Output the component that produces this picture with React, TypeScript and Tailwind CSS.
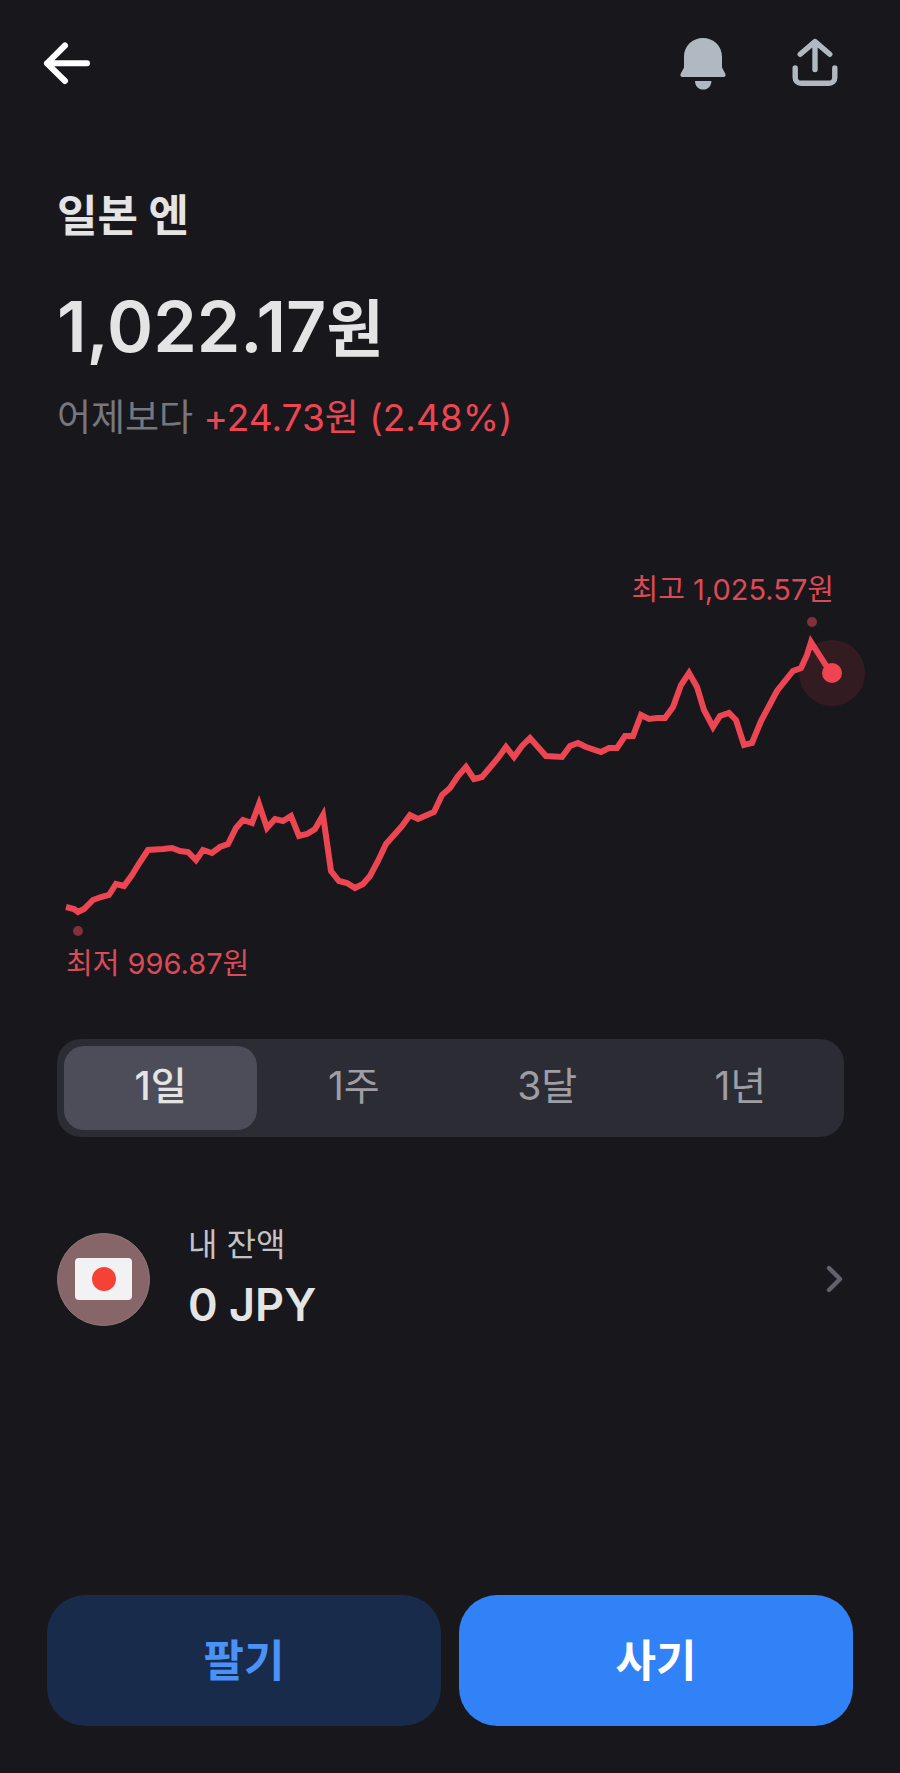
import React, { useState } from 'react';

const PERIODS = ['1일', '1주', '3달', '1년'];

const RATE_POINTS: [number, number][] = [
  [66, 907], [74, 909], [78, 912], [84, 909], [93, 900], [101, 897], [109, 895], [116, 884],
  [124, 886], [132, 875], [140, 862], [148, 850], [163, 849], [172, 848], [180, 851], [188, 852],
  [196, 860], [203, 850], [212, 853], [220, 847], [228, 844], [236, 828], [243, 820], [252, 823],
  [259, 804], [267, 828], [275, 819], [283, 821], [291, 816], [299, 836], [307, 834], [315, 829],
  [323, 815], [331, 871], [339, 881], [347, 883], [355, 888], [363, 884], [370, 876], [378, 861],
  [386, 844], [402, 826], [410, 815], [418, 819], [434, 812], [442, 795], [450, 788], [458, 776],
  [466, 767], [474, 779], [482, 777], [498, 758], [506, 747], [514, 757], [522, 746], [530, 738],
  [546, 756], [562, 757], [570, 746], [578, 743], [586, 747], [601, 752], [609, 748], [617, 748],
  [625, 736], [633, 736], [641, 715], [649, 719], [657, 718], [665, 718], [673, 707], [681, 685],
  [689, 673], [697, 687], [704, 710], [713, 727], [720, 716], [729, 713], [736, 720], [744, 745],
  [752, 743], [761, 721], [777, 691], [793, 671], [801, 668], [807, 655], [811, 642], [827, 667],
  [832, 673],
];

const RateChart: React.FC = () => (
  <svg className="block w-full" viewBox="0 610 900 330" fill="none" role="img" aria-label="엔 환율 차트">
    <circle cx="832" cy="673" r="33" fill="#f04452" fillOpacity="0.12" />
    <polyline
      points={RATE_POINTS.map((p) => p.join(',')).join(' ')}
      stroke="#ec4653"
      strokeWidth="6"
      strokeMiterlimit="6"
    />
    <circle cx="832" cy="673" r="10" fill="#f04452" />
    <circle cx="812" cy="622" r="5" fill="#84303b" />
    <circle cx="78" cy="931" r="5" fill="#84303b" />
  </svg>
);

const App: React.FC = () => {
  const [period, setPeriod] = useState('1일');

  return (
    <div className="min-h-screen flex flex-col bg-[#18171c] text-[#e4e4e5] font-['Inter','Noto_Sans_CJK_KR',sans-serif]">
      {/* Top bar */}
      <header className="h-[126px] flex items-center justify-between pl-[39px] pr-[57px]">
        <button aria-label="뒤로">
          <svg className="w-14 h-14" viewBox="0 0 56 56" fill="none" stroke="#fff" strokeWidth="6" strokeLinecap="round" strokeLinejoin="round">
            <path d="M26 10.5 8 28.3 26 46M8 28.3H48" />
          </svg>
        </button>
        <div className="flex gap-14">
          <button aria-label="알림">
            <svg className="w-14 h-14" viewBox="0 0 56 56" fill="#b0b8c1">
              <path d="M28 3C17.5 3 9 11 9 21.5V32.5L5.8 38.6C4.8 40.5 5.6 42 7.6 42H48.4C50.4 42 51.2 40.5 50.2 38.6L47 32.5V21.5C47 11 38.5 3 28 3Z" />
              <path d="M20 46H36.4C36.4 51 32.8 54.6 28.2 54.6S20 51 20 46Z" />
            </svg>
          </button>
          <button aria-label="공유">
            <svg className="w-14 h-14" viewBox="0 0 56 56" fill="none" stroke="#b0b8c1" strokeWidth="5.4" strokeLinecap="round" strokeLinejoin="round">
              <path d="M28 34.5V7M13.2 19.3 28 6.6 42.8 19.3" />
              <path d="M8.2 33V42.5C8.2 45.8 10.7 48.3 14 48.3H42C45.3 48.3 47.8 45.8 47.8 42.5V33" />
            </svg>
          </button>
        </div>
      </header>

      <main>
        {/* Current rate */}
        <section className="pl-[57px] pr-14 pt-[62px]">
          <h1 className="text-[44px] leading-[56px] font-bold">일본 엔</h1>
          <p className="mt-[43px] text-[70px] leading-[80px] font-semibold">
            1,022.17<span className="text-[62px]">원</span>
          </p>
          <p className="mt-6 text-[37px] leading-[48px] text-[#77777f]">
            어제보다 <span className="text-[#ec4653]">+24.73원 (2.48%)</span>
          </p>
        </section>

        <section className="mt-32 text-[29px] leading-[40px] text-[#dc4a56]">
          <p className="pr-[66px] text-right">최고 1,025.57원</p>
          <RateChart />
          <p className="mt-1 pl-[66px]">최저 996.87원</p>
        </section>

        {/* Period picker */}
        <div className="ml-[57px] mr-14 mt-[55px] flex rounded-[24px] bg-[#2c2c35] p-[7px]">
          {PERIODS.map((p) => (
            <button
              key={p}
              onClick={() => setPeriod(p)}
              aria-pressed={period === p}
              className={`flex-1 h-[84px] pb-1 rounded-[20px] text-[39px] leading-[48px] ${
                period === p ? 'bg-[#4d4d59] text-[#e4e4e5] font-medium' : 'text-[#9e9ea4]'
              }`}
            >
              {p}
            </button>
          ))}
        </div>

        {/* Balance */}
        <a href="#balance" className="mt-18 ml-[57px] mr-14 py-3 flex items-center">
          <span className="w-[93px] h-[93px] shrink-0 flex items-center justify-center rounded-full bg-[#876669] border border-[#93747a]">
            <span className="w-[57px] h-[42px] flex items-center justify-center rounded bg-[#f2f2f5]">
              <span className="w-6 h-6 rounded-full bg-[#f44336]" />
            </span>
          </span>
          <span className="ml-[38px] pb-1 flex-1 flex flex-col">
            <span className="text-[32px] leading-[48px] text-[#c3c3c6]">내 잔액</span>
            <span className="mt-2 text-[45px] leading-[56px] font-semibold">0 JPY</span>
          </span>
          <svg className="w-5 h-8" viewBox="0 0 20 32" fill="none" stroke="#62626c" strokeWidth="4.4" strokeLinecap="round" strokeLinejoin="round">
            <path d="M5 5 16 16 5 27" />
          </svg>
        </a>
      </main>

      {/* Trade buttons */}
      <footer className="mt-auto flex gap-[18px] px-[47px] pt-12 pb-[47px]">
        <button className="flex-1 h-[131px] rounded-[38px] bg-[#192b4b] text-[44px] font-bold text-[#4a92f5]">
          팔기
        </button>
        <button className="flex-1 h-[131px] rounded-[38px] bg-[#3182f6] text-[44px] font-bold text-white">
          사기
        </button>
      </footer>
    </div>
  );
};

export default App;
